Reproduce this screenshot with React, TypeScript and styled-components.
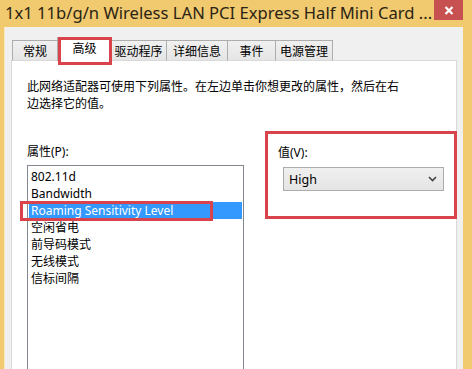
import React from 'react'
import styled, { createGlobalStyle } from 'styled-components'

const GlobalStyle = createGlobalStyle`
  html, body {
    margin: 0;
    padding: 0;
    background: #f1c96f;
    overflow: hidden;
  }
  #root {
    width: 472px;
    height: 369px;
    overflow: hidden;
  }
`

const uiFont = `"Noto Sans", "Noto Sans CJK SC", sans-serif`

const StyledWindow = styled.div`
  display: flex;
  flex-direction: column;
  width: 472px;
  height: 369px;
  background: #f1c96f;
  padding: 0 9px 0 4px;
  box-sizing: border-box;
  font-family: ${uiFont};
`
const StyledTitleBar = styled.div`
  display: flex;
  align-items: flex-start;
  justify-content: space-between;
  height: 27px;
  flex-shrink: 0;
`
const StyledTitle = styled.div`
  flex: 1;
  min-width: 0;
  padding: 2px 0 0 1px;
  font-size: 16.6px;
  line-height: 22px;
  color: #2b2414;
  white-space: nowrap;
  overflow: hidden;
`
const StyledCloseButton = styled.div`
  flex: 0 0 29px;
  display: flex;
  align-items: center;
  justify-content: center;
  height: 20px;
  background: #c75050;
`
const StyledClient = styled.div`
  flex: 1;
  display: flex;
  flex-direction: column;
  background: #f0f0f0;
  border-left: 1px solid #f8e6bd;
  padding: 12px 6px 0 6px;
  min-height: 0;
`
const StyledTabStrip = styled.div`
  display: flex;
  align-items: flex-end;
  height: 22px;
  padding-left: 1px;
  position: relative;
  z-index: 1;
  margin-bottom: -1px;
`
const StyledTab = styled.div<{ $width: number; $active?: boolean; $first?: boolean }>`
  display: flex;
  align-items: center;
  justify-content: center;
  box-sizing: border-box;
  width: ${p => p.$width}px;
  height: ${p => (p.$active ? 24 : 21)}px;
  margin: ${p => (p.$active ? '0 -1px' : '0')};
  padding-bottom: ${p => (p.$active ? 3 : 0)}px;
  border: 1px solid #adadad;
  border-bottom: ${p => (p.$active ? 'none' : '1px solid #d9d9d9')};
  border-left-width: ${p => (p.$first || p.$active ? 1 : 0)}px;
  background: ${p => (p.$active ? '#ffffff' : 'linear-gradient(#f0f0f0, #e5e5e5)')};
  font-size: 12px;
  color: #000;
  position: relative;
  z-index: ${p => (p.$active ? 2 : 0)};

  /* red annotation frame round the active tab */
  &::after {
    content: '';
    display: ${p => (p.$active ? 'block' : 'none')};
    position: absolute;
    left: 0;
    right: -1px;
    top: -1px;
    bottom: -4px;
    border: 3px solid #d9434b;
  }
`
const StyledTabPage = styled.div`
  flex: 1;
  background: #fff;
  border: 1px solid #d9d9d9;
  border-bottom: none;
  padding: 17px 0 0 15px;
  display: flex;
  flex-direction: column;
`
const StyledDescription = styled.div`
  width: 380px;
  font-size: 12px;
  line-height: 17px;
  color: #000;
`
const StyledSettingsRow = styled.div`
  display: flex;
  align-items: flex-start;
  gap: 21px;
  margin-top: 19px;
`
const StyledColumn = styled.div`
  display: flex;
  flex-direction: column;
  padding-top: 12px;
`
const StyledLabel = styled.div`
  font-size: 12px;
  line-height: 17px;
  color: #000;
`
const StyledListWrap = styled.div`
  position: relative;
  margin-top: 5px;
`
const StyledList = styled.div`
  width: 217px;
  height: 230px;
  box-sizing: border-box;
  border: 1px solid #828790;
  padding: 2px 1px;
  background: #fff;
`
const StyledListItem = styled.div<{ $selected?: boolean }>`
  height: 17px;
  line-height: 17px;
  padding-left: 2px;
  font-size: 12px;
  color: ${p => (p.$selected ? '#fff' : '#000')};
  background: ${p => (p.$selected ? '#3399ff' : 'transparent')};
  white-space: nowrap;
`
const StyledMarker = styled.div`
  position: absolute;
  left: -7px;
  top: 36px;
  width: 193px;
  height: 20px;
  box-sizing: border-box;
  border: 3px solid #d9434b;
  pointer-events: none;
`
const StyledValueGroup = styled.div`
  display: flex;
  flex-direction: column;
  width: 192px;
  box-sizing: border-box;
  border: 3px solid #d9434b;
  padding: 10px 10px 25px 10px;
`
const StyledCombo = styled.div`
  display: flex;
  align-items: center;
  justify-content: space-between;
  box-sizing: border-box;
  width: 161px;
  height: 24px;
  margin: 6px 0 0 5px;
  padding: 0 6px 0 5px;
  border: 1px solid #acacac;
  background: linear-gradient(#f0f0f0, #e5e5e5);
  font-size: 12.5px;
  color: #000;
`

const tabs = [
  { label: '常规', width: 46 },
  { label: '高级', width: 55, active: true },
  { label: '驱动程序', width: 56 },
  { label: '详细信息', width: 61 },
  { label: '事件', width: 48 },
  { label: '电源管理', width: 57 }
]

const properties = [
  '802.11d',
  'Bandwidth',
  'Roaming Sensitivity Level',
  '空闲省电',
  '前导码模式',
  '无线模式',
  '信标间隔'
]

const CloseIcon = () => (
  <svg width="10" height="9" viewBox="0 0 10 9">
    <path d="M1.5 1 L8.5 8 M8.5 1 L1.5 8" stroke="#ffffff" strokeWidth="2.2" />
  </svg>
)

const Chevron = () => (
  <svg width="9" height="6" viewBox="0 0 9 6">
    <path d="M1 1 L4.5 4.5 L8 1" fill="none" stroke="#444" strokeWidth="1.6" />
  </svg>
)

const App: React.FC = () => {
  return (
    <>
      <GlobalStyle />
      <StyledWindow>
        <StyledTitleBar>
          <StyledTitle>1x1 11b/g/n Wireless LAN PCI Express Half Mini Card ...</StyledTitle>
          <StyledCloseButton>
            <CloseIcon />
          </StyledCloseButton>
        </StyledTitleBar>
        <StyledClient>
          <StyledTabStrip>
            {tabs.map((tab, i) => (
              <StyledTab key={tab.label} $width={tab.width} $active={tab.active} $first={i === 0}>
                {tab.label}
              </StyledTab>
            ))}
          </StyledTabStrip>
          <StyledTabPage>
            <StyledDescription>
              此网络适配器可使用下列属性。在左边单击你想更改的属性，然后在右边选择它的值。
            </StyledDescription>
            <StyledSettingsRow>
              <StyledColumn>
                <StyledLabel>属性(P):</StyledLabel>
                <StyledListWrap>
                  <StyledList>
                    {properties.map(item => (
                      <StyledListItem key={item} $selected={item === 'Roaming Sensitivity Level'}>
                        {item}
                      </StyledListItem>
                    ))}
                  </StyledList>
                  <StyledMarker />
                </StyledListWrap>
              </StyledColumn>
              <StyledValueGroup>
                <StyledLabel>值(V):</StyledLabel>
                <StyledCombo>
                  <span>High</span>
                  <Chevron />
                </StyledCombo>
              </StyledValueGroup>
            </StyledSettingsRow>
          </StyledTabPage>
        </StyledClient>
      </StyledWindow>
    </>
  )
}

export default App
